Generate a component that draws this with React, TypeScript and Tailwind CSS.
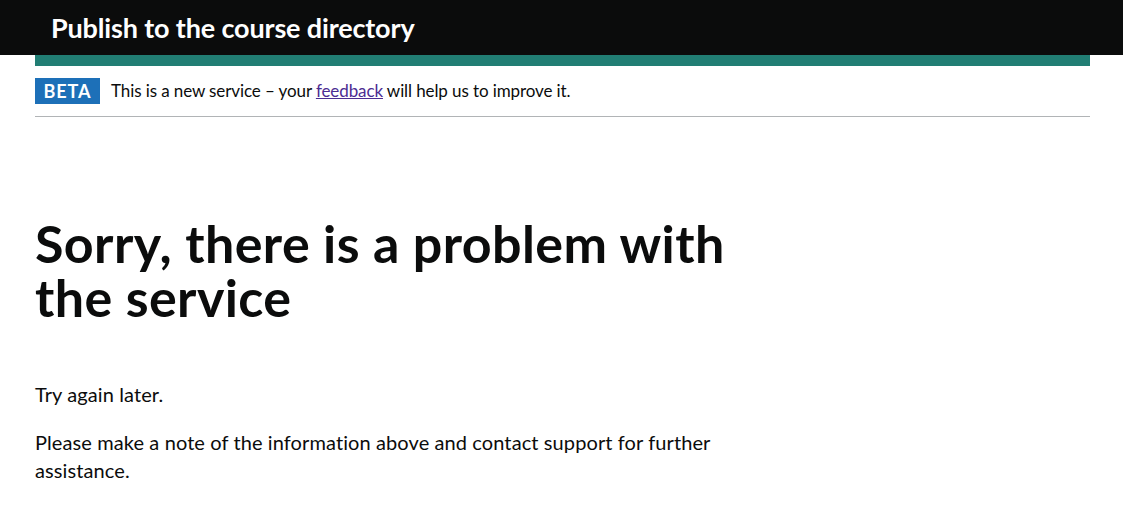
export default function App() {
  return (
    <div className="min-h-[505px] bg-white text-[#0b0c0c]" style={{ fontFamily: "Lato, 'Noto Sans', Arial, sans-serif" }}>
      <header className="bg-[#0b0c0c]">
        <div className="ml-[35px] w-[1055px]">
          <div className="h-[55px] flex items-center pl-[16px]">
            <span className="text-white font-bold text-[27px] leading-none tracking-[-0.15px]">Publish to the course directory</span>
          </div>
        </div>
      </header>
      <div className="ml-[35px] w-[1055px]">
        <div className="h-[11px] bg-[#217e74]"></div>
        <div className="flex items-center h-[51px] border-b border-[#b1b4b6]">
          <span className="bg-[#1d70b8] text-white font-bold text-[18px] h-[26px] w-[65px] flex items-center justify-center tracking-[1px]">BETA</span>
          <span className="ml-[11px] text-[17px] tracking-[-0.1px]">
            This is a new service – your <a href="#" className="text-[#4c2c92] underline">feedback</a> will help us to improve it.
          </span>
        </div>
        <h1 className="mt-[99px] font-bold text-[52px] leading-[54px] w-[740px] tracking-[0.4px]">Sorry, there is a problem with the service</h1>
        <p className="mt-[56px] text-[20px] leading-[28px] tracking-[0.1px]">Try again later.</p>
        <p className="mt-[20px] text-[20px] leading-[28px] tracking-[0.1px] w-[720px]">Please make a note of the information above and contact support for further assistance.</p>
      </div>
    </div>
  );
}
